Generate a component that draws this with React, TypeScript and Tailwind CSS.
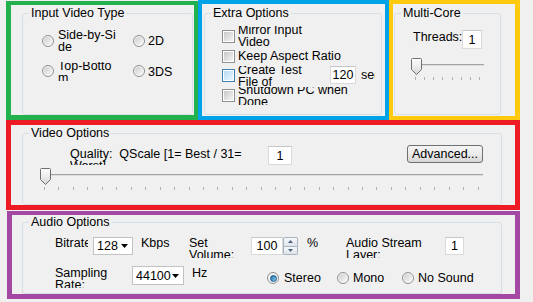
import React from 'react';

// Win7-style dialog controls, boxed by the coloured annotation frames
const GROUP = 'm-0 min-w-0 rounded-[3px] border border-[#d5dfe5] p-0';
const LEGEND = 'ml-[6px] px-[2px] leading-[14px]';

function Radio({ checked = false }: { checked?: boolean }) {
  return (
    <span className="flex h-[12px] w-[12px] shrink-0 items-center justify-center rounded-full border border-[#8e8f8f] bg-linear-to-br from-[#eeeeee] to-white">
      {checked ? (
        <span className="h-[7px] w-[7px] rounded-full border border-[#1c5180] bg-linear-to-br from-[#1f6ea8] to-[#8fd3f5]" />
      ) : (
        <span className="h-[8px] w-[8px] rounded-full bg-linear-to-br from-[#cfcfcf] to-[#f8f8f8]" />
      )}
    </span>
  );
}

function Check({ hot = false }: { hot?: boolean }) {
  return (
    <span
      className={`flex h-[13px] w-[13px] shrink-0 items-center justify-center border bg-white ${
        hot ? 'border-[#3c7fb1]' : 'border-[#8e8f8f]'
      }`}
    >
      <span
        className={`h-[9px] w-[9px] bg-linear-to-br ${
          hot ? 'from-[#b6dcf5] to-[#eaf6fd]' : 'from-[#c9c9c9] to-[#f4f4f4]'
        }`}
      />
    </span>
  );
}

function Edit({ className, children }: { className: string; children: React.ReactNode }) {
  return (
    <div className={`flex shrink-0 items-center justify-center border border-[#dadada] border-t-[#c6c6c6] bg-white ${className}`}>
      {children}
    </div>
  );
}

// fixed-size label box, two lines centred and clipped like the original
function Clip({ className, lines }: { className: string; lines: string[] }) {
  return (
    <div className={`flex shrink-0 items-center overflow-hidden ${className}`}>
      <div className="whitespace-pre">
        {lines.map((l, i) => (
          <div key={i}>{l}</div>
        ))}
      </div>
    </div>
  );
}

function Label({ className, lines }: { className: string; lines: string[] }) {
  return (
    <div className={`shrink-0 overflow-hidden whitespace-pre ${className}`}>
      {lines.map((l, i) => (
        <div key={i}>{l}</div>
      ))}
    </div>
  );
}

function Combo({ className, value }: { className: string; value: string }) {
  return (
    <div className={`flex shrink-0 items-center justify-between border border-[#c2c2c2] bg-white pl-[3px] pr-[4px] ${className}`}>
      <span>{value}</span>
      <svg width="7" height="4" viewBox="0 0 7 4">
        <path d="M0 0H7L3.5 4Z" fill="#000" />
      </svg>
    </div>
  );
}

function Thumb({ id }: { id: string }) {
  return (
    <svg width="11" height="17" viewBox="0 0 11 17">
      <defs>
        <linearGradient id={id} x1="0" y1="0" x2="0" y2="1">
          <stop offset="0" stopColor="#fdfdfd" />
          <stop offset="0.5" stopColor="#ececec" />
          <stop offset="1" stopColor="#d6d6d6" />
        </linearGradient>
      </defs>
      <path
        d="M1.5 0.5H9.5Q10.5 0.5 10.5 1.5V11.5L5.5 16.5L0.5 11.5V1.5Q0.5 0.5 1.5 0.5Z"
        fill={`url(#${id})`}
        stroke="#6f6f6f"
      />
    </svg>
  );
}

function Slider({ className, ticks, id }: { className: string; ticks: number; id: string }) {
  return (
    <div className={`flex shrink-0 flex-col ${className}`}>
      <div className="relative h-[17px]">
        <div className="absolute left-[3px] right-0 top-[6px] h-[2px] border-t border-[#a3a3a3] bg-[#dcdcdc]" />
        <div className="absolute left-0 top-0 flex">
          <Thumb id={id} />
        </div>
      </div>
      <div className="mt-[2px] flex justify-between pl-[4px] pr-[4px]">
        {Array.from({ length: ticks }).map((_, i) => (
          <span key={i} className="h-[3px] w-px bg-[#b0b0b0]" />
        ))}
      </div>
    </div>
  );
}

function Spin() {
  return (
    <div className="flex h-[18px] w-[15px] shrink-0 flex-col">
      <div className="flex flex-1 items-center justify-center rounded-t-[2px] border border-[#a9b4c2] bg-linear-to-b from-[#f6f8fa] to-[#dfe5ec]">
        <svg width="5" height="3" viewBox="0 0 5 3">
          <path d="M0 3H5L2.5 0Z" fill="#4e6384" />
        </svg>
      </div>
      <div className="flex flex-1 items-center justify-center rounded-b-[2px] border border-t-0 border-[#a9b4c2] bg-linear-to-b from-[#f6f8fa] to-[#dfe5ec]">
        <svg width="5" height="3" viewBox="0 0 5 3">
          <path d="M0 0H5L2.5 3Z" fill="#4e6384" />
        </svg>
      </div>
    </div>
  );
}

export default function App() {
  return (
    <div className="h-[302px] w-[533px] overflow-hidden bg-[#f0f0f0] pl-[6px] font-['Liberation_Sans',Arial,sans-serif] text-[12.5px] leading-[12px] text-black">
      {/* TOP ROW */}
      <div className="flex items-start">
        {/* Input video type */}
        <div className="mt-px h-[119px] w-[192px] border-[5px] border-r-4 border-t-4 border-[#22b14c] pl-[11px] pt-px">
          <fieldset className={`${GROUP} h-[109px] w-[171px]`}>
            <legend className={LEGEND}>Input Video Type</legend>
            <div className="mt-[10px] flex items-start pl-[19px]">
              <div className="mt-[5px]"><Radio /></div>
              <Clip className="ml-[4px] h-[21px] w-[75px]" lines={['Side-by-Si', 'de']} />
              <div className="mt-[5px]"><Radio /></div>
              <div className="ml-[3px] mt-[5px]">2D</div>
            </div>
            <div className="mt-[11px] flex items-start pl-[19px]">
              <div className="mt-[3px]"><Radio /></div>
              <Clip className="ml-[4px] h-[19px] w-[75px]" lines={['Top-Botto', 'm']} />
              <div className="mt-[3px]"><Radio /></div>
              <div className="ml-[3px] mt-[4px]">3DS</div>
            </div>
          </fieldset>
        </div>

        {/* Extra options */}
        <div className="h-[120px] w-[191px] border-4 border-[#00a2e8] pl-[2px] pt-[2px]">
          <fieldset className={`${GROUP} h-[109px] w-[178px]`}>
            <legend className={LEGEND}>Extra Options</legend>
            <div className="mt-[6px] flex items-start pl-[17px]">
              <div className="mt-[4px]"><Check /></div>
              <Clip className="ml-[3px] h-[20px] w-[130px]" lines={['Mirror Input', 'Video']} />
            </div>
            <div className="flex items-start pl-[17px]">
              <div className="mt-[4px]"><Check /></div>
              <Clip className="ml-[3px] h-[20px] w-[130px]" lines={['Keep Aspect Ratio']} />
            </div>
            <div className="flex items-start pl-[17px]">
              <div className="mt-[3px]"><Check hot /></div>
              <Clip className="ml-[3px] h-[20px] w-[92px]" lines={['Create Test', 'File of']} />
              <Edit className="h-[18px] w-[26px]">120</Edit>
              <Clip className="ml-[5px] h-[18px] w-[14px]" lines={['sec']} />
            </div>
            <div className="mt-px flex items-start pl-[17px]">
              <div className="mt-[2px]"><Check /></div>
              <Clip className="ml-[3px] h-[18px] w-[130px]" lines={['Shutdown PC when', 'Done']} />
            </div>
          </fieldset>
        </div>

        {/* Multi-core */}
        <div className="h-[120px] w-[131px] border-4 border-r-[5px] border-[#ffc90e] pl-px pt-[2px]">
          <fieldset className={`${GROUP} h-[109px] w-[107px]`}>
            <legend className={LEGEND}>Multi-Core</legend>
            <div className="mt-[10px] flex items-start pl-[18px]">
              <div className="mt-px w-[49px]">Threads:</div>
              <Edit className="h-[19px] w-[20px]">1</Edit>
            </div>
            <Slider className="ml-[16px] mt-[9px] w-[73px]" ticks={8} id="thumbA" />
          </fieldset>
        </div>
      </div>

      {/* VIDEO OPTIONS */}
      <div className="h-[90px] w-[514px] border-[5px] border-[#ed1c24] pl-[11px] pt-px">
        <fieldset className={`${GROUP} h-[79px] w-[480px]`}>
          <legend className={LEGEND}>Video Options</legend>
          <div className="mt-[6px] flex items-start">
            <Label className="ml-[47px] mt-[2px] h-[17px] w-[198px]" lines={['Quality:  QScale [1= Best / 31=', 'Worst] -']} />
            <Edit className="h-[19px] w-[24px]">1</Edit>
            <div className="flex-1" />
            <div className="-mt-px mr-[18px] flex h-[18px] w-[76px] items-center justify-center rounded-[3px] border border-[#707070] bg-linear-to-b from-[#f4f4f4] via-[#ebebeb] to-[#d6d6d6]">
              Advanced...
            </div>
          </div>
          <Slider className="ml-[17px] mt-[3px] w-[443px]" ticks={31} id="thumbB" />
        </fieldset>
      </div>

      {/* AUDIO OPTIONS */}
      <div className="ml-px mt-px h-[88px] w-[513px] border-[5px] border-t-4 border-[#a349a4] pl-[10px]">
        <fieldset className={`${GROUP} h-[79px] w-[480px]`}>
          <legend className={LEGEND}>Audio Options</legend>
          <div className="mt-[8px] flex items-start">
            <Label className="ml-[32px] w-[33px]" lines={['Bitrate']} />
            <Combo className="ml-[5px] h-[18px] w-[40px]" value="128" />
            <Label className="ml-[8px] w-[48px]" lines={['Kbps']} />
            <Label className="h-[21px] w-[62px]" lines={['Set', 'Volume:']} />
            <Edit className="h-[18px] w-[32px]">100</Edit>
            <Spin />
            <Label className="ml-[9px] w-[39px]" lines={['%']} />
            <Label className="h-[21px] w-[99px]" lines={['Audio Stream', 'Layer:']} />
            <Edit className="h-[18px] w-[19px]">1</Edit>
          </div>
          <div className="mt-[8px] flex items-start">
            <Label className="ml-[32px] mt-px h-[21px] w-[77px]" lines={['Sampling', 'Rate:']} />
            <Combo className="h-[19px] w-[52px]" value="44100" />
            <Label className="ml-[8px] mt-px w-[75px]" lines={['Hz']} />
            <div className="mt-[6px]"><Radio checked /></div>
            <Label className="ml-[5px] mt-[6px] w-[53px]" lines={['Stereo']} />
            <div className="mt-[6px]"><Radio /></div>
            <Label className="ml-[4px] mt-[6px] w-[49px]" lines={['Mono']} />
            <div className="mt-[6px]"><Radio /></div>
            <Label className="ml-[4px] mt-[6px]" lines={['No Sound']} />
          </div>
        </fieldset>
      </div>
    </div>
  );
}
